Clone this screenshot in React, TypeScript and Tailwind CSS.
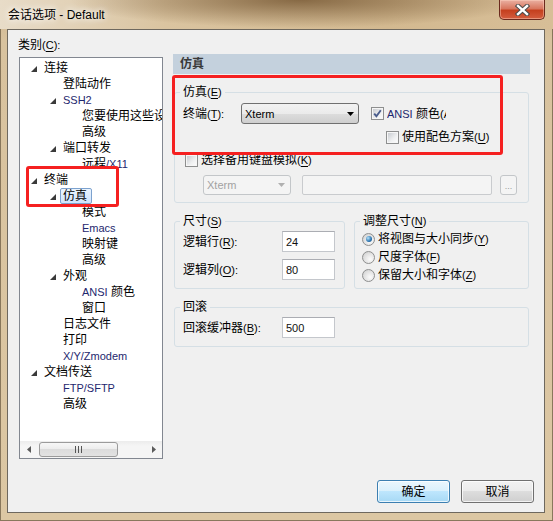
import React from 'react';

function Acc({ k, colon }: { k: string; colon?: boolean }) {
  return (
    <span className="text-[11px]">
      (<span className="underline underline-offset-[2px]">{k}</span>){colon ? ':' : ''}
    </span>
  );
}

function Lat({ children, navy }: { children: React.ReactNode; navy?: boolean }) {
  return <span className={navy ? 'text-[11px] text-[#1e276e]' : 'text-[11px]'}>{children}</span>;
}

function Tri() {
  return (
    <svg width="6" height="6" viewBox="0 0 6 6">
      <polygon points="6,0 6,6 0,6" fill="#3a3a3a" />
    </svg>
  );
}

function Check({ checked }: { checked?: boolean }) {
  return (
    <span className="w-[13px] h-[13px] border border-[#8e8f8f] bg-[#f6f6f6] p-[1px] shrink-0 flex">
      <span className="flex-1 bg-[linear-gradient(135deg,#c9ccd1,#eeeff0_60%,#fbfbfb)] flex items-center justify-center">
        {checked && (
          <svg width="9" height="9" viewBox="0 0 9 9">
            <polyline points="1.2,4.6 3.4,7.2 7.8,1.2" fill="none" stroke="#4a5d8c" strokeWidth="1.9" />
          </svg>
        )}
      </span>
    </span>
  );
}

function Radio({ on }: { on?: boolean }) {
  return (
    <span className="w-[13px] h-[13px] rounded-full border border-[#8e8f8f] bg-[radial-gradient(circle_at_65%_65%,#fbfbfb,#e2e2e2_55%,#c8c8c8)] flex items-center justify-center shrink-0">
      {on && (
        <span className="w-[6px] h-[6px] rounded-full bg-[radial-gradient(circle_at_35%_35%,#b5e3fb,#2c74b0_60%,#174c7e)]" />
      )}
    </span>
  );
}

function TextBox({ value, w }: { value: string; w: string }) {
  return (
    <div
      className={
        w +
        ' h-[21px] border border-[#c4c7cc] border-t-[#abadb3] bg-white flex items-center pl-[3px] text-[11px] leading-[14px] text-[#111]'
      }
    >
      {value}
    </div>
  );
}

type Item = { l: 0 | 1 | 2; arrow?: boolean; t: React.ReactNode; sel?: boolean };

const levelPad: Record<number, string> = { 0: 'pl-[11px]', 1: 'pl-[30px]', 2: 'pl-[49px]' };

const items: Item[] = [
  { l: 0, arrow: true, t: '连接' },
  { l: 1, t: '登陆动作' },
  { l: 1, arrow: true, t: <Lat navy>SSH2</Lat> },
  { l: 2, t: '您要使用这些设置吗' },
  { l: 2, t: '高级' },
  { l: 1, arrow: true, t: '端口转发' },
  { l: 2, t: <>远程<Lat navy>/X11</Lat></> },
  { l: 0, arrow: true, t: '终端' },
  { l: 1, arrow: true, t: '仿真', sel: true },
  { l: 2, t: '模式' },
  { l: 2, t: <Lat navy>Emacs</Lat> },
  { l: 2, t: '映射键' },
  { l: 2, t: '高级' },
  { l: 1, arrow: true, t: '外观' },
  { l: 2, t: <><Lat navy>ANSI</Lat> 颜色</> },
  { l: 2, t: '窗口' },
  { l: 1, t: '日志文件' },
  { l: 1, t: '打印' },
  { l: 1, t: <Lat navy>X/Y/Zmodem</Lat> },
  { l: 0, arrow: true, t: '文档传送' },
  { l: 1, t: <Lat navy>FTP/SFTP</Lat> },
  { l: 1, t: '高级' },
];

function Tree() {
  return (
    <div className="mt-[5px] w-[144px] h-[402px] border border-[#828790] bg-white flex flex-col">
      <div className="flex-1 overflow-hidden pt-[2px]">
        {items.map((it, i) => (
          <div key={i} className={'h-[16px] flex items-center whitespace-nowrap leading-[14px] ' + levelPad[it.l]}>
            <span className="w-[13px] shrink-0 flex items-center pt-[1px]">{it.arrow && <Tri />}</span>
            {it.sel ? (
              <span className="-ml-[3px] h-[16px] pl-[2px] pr-[4px] border border-[#7da2ce] rounded-[2px] bg-[linear-gradient(to_bottom,#ebf4fe,#cfe4fe)] flex items-center">
                {it.t}
              </span>
            ) : (
              <span>{it.t}</span>
            )}
          </div>
        ))}
      </div>
      <div className="h-[17px] flex items-center bg-[linear-gradient(to_bottom,#ececec,#f5f5f5_30%,#f5f5f5)]">
        <div className="w-[17px] h-full flex items-center justify-center">
          <svg width="4" height="7" viewBox="0 0 4 7">
            <polygon points="4,0 4,7 0,3.5" fill="#5a5a5a" />
          </svg>
        </div>
        <div className="ml-[2px] w-[79px] h-[15px] rounded-[3px] border border-[#9b9b9b] bg-[linear-gradient(to_bottom,#f7f7f7,#ececec_50%,#dcdcdc_50%,#e2e2e2)] flex items-center justify-center gap-[2px]">
          <span className="w-[1px] h-[7px] bg-[#555]" />
          <span className="w-[1px] h-[7px] bg-[#555]" />
          <span className="w-[1px] h-[7px] bg-[#555]" />
        </div>
        <div className="flex-1" />
        <div className="w-[17px] h-full flex items-center justify-center">
          <svg width="4" height="7" viewBox="0 0 4 7">
            <polygon points="0,0 0,7 4,3.5" fill="#5a5a5a" />
          </svg>
        </div>
      </div>
    </div>
  );
}

export default function App() {
  return (
    <div className="relative w-[553px] h-[521px] overflow-hidden flex flex-col bg-[linear-gradient(to_bottom,#cdb48e,#d8c29e_40px,#dcc7a3)] shadow-[inset_0_0_0_1px_rgba(70,55,35,0.55)] font-['Liberation_Sans','Noto_Sans_CJK_SC',sans-serif] text-[12px] text-black">
      {/* title bar */}
      <div className="h-[29px] flex items-start bg-[radial-gradient(ellipse_230px_28px_at_300px_0px,rgba(115,84,48,0.8),rgba(115,84,48,0)),linear-gradient(to_right,#e8dcc8,#dac4a0_30%,#d3b990_70%,#d7be97)]">
        <div className="flex-1 pl-[8px] pt-[8px] leading-[14px] [text-shadow:0_0_6px_#fff,0_0_10px_rgba(255,255,255,0.9)]">
          会话选项 - Default
        </div>
        <div className="mr-[8px] w-[46px] h-[20px] rounded-b-[5px] border border-t-0 border-[#6b2a1e] bg-[linear-gradient(to_bottom,#eab0a2,#d8775f_45%,#c5401f_55%,#d45d3f)] shadow-[inset_0_0_0_1px_rgba(255,215,195,0.45)] flex items-center justify-center">
          <svg width="15" height="12" viewBox="0 0 15 12">
            <g strokeLinecap="square">
              <line x1="3" y1="2" x2="12" y2="10" stroke="#4a4a4a" strokeWidth="4.4" />
              <line x1="12" y1="2" x2="3" y2="10" stroke="#4a4a4a" strokeWidth="4.4" />
              <line x1="3" y1="2" x2="12" y2="10" stroke="#ffffff" strokeWidth="2.4" />
              <line x1="12" y1="2" x2="3" y2="10" stroke="#ffffff" strokeWidth="2.4" />
            </g>
          </svg>
        </div>
      </div>

      {/* client area */}
      <div className="ml-[7px] w-[538px] h-[484px] border border-[#6e685e] bg-[#f0f0f0] flex flex-col">
        <div className="flex items-start">
          <div className="ml-[11px] pt-[8px] flex flex-col">
            <div className="h-[14px] leading-[14px] -ml-[1px]">
              类别<Acc k="C" colon />
            </div>
            <Tree />
          </div>

          <div className="ml-[10px] mt-[24px] w-[357px] flex flex-col">
            <div className="h-[20px] bg-[#c4d1dd] flex items-center pl-[7px] font-bold text-[#3a3a3a] leading-[14px]">
              仿真
            </div>

            {/* 仿真 group */}
            <fieldset className="mt-[11px] ml-[1px] w-[355px] border border-[#d5dfe5] rounded-[3px]">
              <legend className="ml-[5px] px-[3px] leading-[14px]">
                仿真<Acc k="E" />
              </legend>
              <div className="pt-[4px] pb-[7px] flex flex-col leading-[14px]">
                <div className="h-[21px] flex items-center">
                  <span className="ml-[8px] w-[58px] shrink-0 whitespace-nowrap">
                    终端<Acc k="T" colon />
                  </span>
                  <div className="w-[118px] h-[21px] rounded-[3px] border border-[#707070] bg-[linear-gradient(to_bottom,#f2f2f2,#ebebeb_50%,#dddddd_50%,#cfcfcf)] flex items-center pl-[3px] pr-[4px] text-[11px]">
                    <span className="flex-1">Xterm</span>
                    <svg width="7" height="4" viewBox="0 0 7 4">
                      <polygon points="0,0 7,0 3.5,4" fill="#000" />
                    </svg>
                  </div>
                  <span className="ml-[12px]">
                    <Check checked />
                  </span>
                  <span className="ml-[3px] w-[59px] overflow-hidden whitespace-nowrap">
                    <Lat navy>ANSI</Lat> 颜色<span className="text-[11px]">(A)</span>
                  </span>
                </div>
                <div className="mt-[6px] h-[14px] flex items-center">
                  <span className="ml-[211px]">
                    <Check />
                  </span>
                  <span className="ml-[3px] whitespace-nowrap">
                    使用配色方案<Acc k="U" />
                  </span>
                </div>
                <div className="mt-[9px] h-[14px] flex items-center">
                  <span className="ml-[10px]">
                    <Check />
                  </span>
                  <span className="ml-[3px] whitespace-nowrap">
                    选择备用键盘模拟<Acc k="K" />
                  </span>
                </div>
                <div className="mt-[8px] h-[20px] flex items-stretch">
                  <div className="ml-[28px] w-[88px] rounded-[3px] border border-[#c3c6c9] bg-[#f4f4f4] flex items-center pl-[3px] pr-[5px] text-[11px] text-[#a2a2a2]">
                    <span className="flex-1">Xterm</span>
                    <svg width="7" height="4" viewBox="0 0 7 4">
                      <polygon points="0,0 7,0 3.5,4" fill="#b0b0b0" />
                    </svg>
                  </div>
                  <div className="ml-[11px] w-[190px] rounded-[2px] border border-[#c9cbce] bg-[#f4f4f4]" />
                  <div className="ml-[8px] w-[17px] rounded-[3px] border border-[#c3c6c9] bg-[#f4f4f4] flex items-end justify-center pb-[3px] text-[9px] leading-[9px] text-[#9a9a9a]">
                    ...
                  </div>
                </div>
              </div>
            </fieldset>

            {/* size groups */}
            <div className="mt-[11px] ml-[1px] flex gap-[9px]">
              <fieldset className="w-[171px] border border-[#d5dfe5] rounded-[3px]">
                <legend className="ml-[5px] px-[3px] leading-[14px]">
                  尺寸<Acc k="S" />
                </legend>
                <div className="pt-[3px] pb-[8px] flex flex-col leading-[14px]">
                  <div className="h-[21px] flex items-center">
                    <span className="ml-[8px] w-[99px] shrink-0">
                      逻辑行<Acc k="R" colon />
                    </span>
                    <TextBox value="24" w="w-[53px]" />
                  </div>
                  <div className="mt-[7px] h-[21px] flex items-center">
                    <span className="ml-[8px] w-[99px] shrink-0">
                      逻辑列<Acc k="O" colon />
                    </span>
                    <TextBox value="80" w="w-[53px]" />
                  </div>
                </div>
              </fieldset>
              <fieldset className="w-[175px] border border-[#d5dfe5] rounded-[3px]">
                <legend className="ml-[5px] px-[3px] leading-[14px]">
                  调整尺寸<Acc k="N" />
                </legend>
                <div className="pt-[2px] pb-[4px] flex flex-col leading-[14px]">
                  <div className="h-[18px] flex items-center">
                    <span className="ml-[7px]">
                      <Radio on />
                    </span>
                    <span className="ml-[3px] whitespace-nowrap">
                      将视图与大小同步<Acc k="Y" />
                    </span>
                  </div>
                  <div className="h-[18px] flex items-center">
                    <span className="ml-[7px]">
                      <Radio />
                    </span>
                    <span className="ml-[3px] whitespace-nowrap">
                      尺度字体<Acc k="F" />
                    </span>
                  </div>
                  <div className="h-[18px] flex items-center">
                    <span className="ml-[7px]">
                      <Radio />
                    </span>
                    <span className="ml-[3px] whitespace-nowrap">
                      保留大小和字体<Acc k="Z" />
                    </span>
                  </div>
                </div>
              </fieldset>
            </div>

            {/* scrollback group */}
            <fieldset className="mt-[11px] ml-[1px] w-[355px] border border-[#d5dfe5] rounded-[3px]">
              <legend className="ml-[5px] px-[3px] leading-[14px]">回滚</legend>
              <div className="pt-[3px] pb-[8px] flex flex-col leading-[14px]">
                <div className="h-[21px] flex items-center">
                  <span className="ml-[8px] w-[99px] shrink-0 whitespace-nowrap">
                    回滚缓冲器<Acc k="B" colon />
                  </span>
                  <TextBox value="500" w="w-[53px]" />
                </div>
              </div>
            </fieldset>
          </div>
        </div>

        <div className="mt-auto flex justify-end gap-[11px] pr-[10px] pb-[9px] leading-[14px]">
          <div className="w-[73px] h-[23px] rounded-[3px] border border-[#3c7fb1] bg-[linear-gradient(to_bottom,#eaf6fd,#d9f0fc_50%,#bee6fd_50%,#a7d9f5)] shadow-[inset_0_0_0_1px_rgba(255,255,255,0.75)] flex items-center justify-center">
            确定
          </div>
          <div className="w-[73px] h-[23px] rounded-[3px] border border-[#707070] bg-[linear-gradient(to_bottom,#f2f2f2,#ebebeb_50%,#dddddd_50%,#cfcfcf)] shadow-[inset_0_0_0_1px_rgba(255,255,255,0.75)] flex items-center justify-center">
            取消
          </div>
        </div>
      </div>

      {/* red annotation rectangles */}
      <div className="absolute left-[26px] top-[166px] w-[93px] h-[41px] border-[3px] border-[#f52020] rounded-[3px] pointer-events-none" />
      <div className="absolute left-[172px] top-[75px] w-[331px] h-[80px] border-[3px] border-[#f52020] rounded-[3px] pointer-events-none" />
    </div>
  );
}
